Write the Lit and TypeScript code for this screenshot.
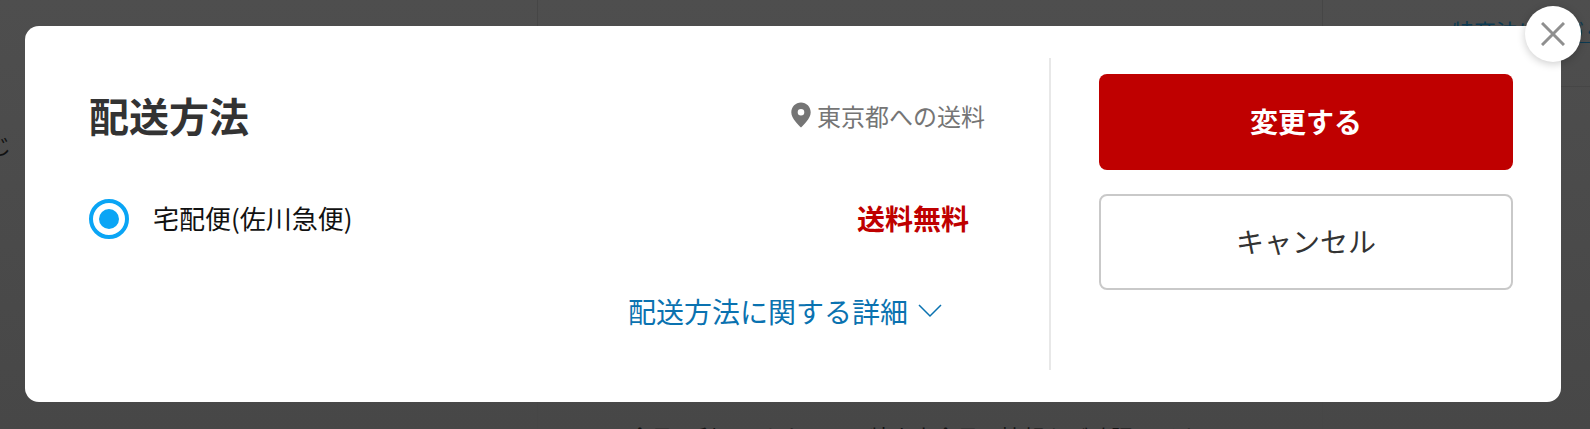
import { LitElement, html, css } from "lit";
import { customElement } from "lit/decorators.js";

@customElement("app-root")
export class AppRoot extends LitElement {
  static styles = css`
    :host { display: block; width: 1590px; height: 429px; position: relative; overflow: hidden; background: #4a4a4a; font-family: "Noto Sans CJK JP", "Liberation Sans", sans-serif; }
    .backdrop { position: absolute; inset: 0; background: linear-gradient(#4e4e4e, #474747); }
    .vline { position: absolute; top: 0; bottom: 0; width: 1px; background: #464646; }
    .v1 { left: 537px; }
    .v2 { left: 1322px; }
    .hline { position: absolute; left: 1561px; right: 0; top: 86px; height: 1px; background: #464646; }
    .bg-text { position: absolute; color: #111; white-space: nowrap; font-size: 22px; line-height: 24px; }
    .t1 { left: -33px; top: 132px; }
    .t2 { left: 629px; top: 424px; }
    .t3 { left: 1452px; top: 18px; color: #0b3a52; border-bottom: 1px solid #0b3a52; }
    .modal { position: absolute; left: 25px; top: 26px; width: 1536px; height: 376px; box-sizing: border-box; background: #fff; border-radius: 14px; display: flex; padding: 32px 0; }
    .main { width: 1026px; box-sizing: border-box; border-right: 2px solid #e8e8e8; padding: 0 64px 0 64px; display: flex; flex-direction: column; }
    .head { display: flex; align-items: center; justify-content: space-between; height: 52px; margin-top: 31px; }
    h2 { margin: 0; font-size: 40px; font-weight: 700; color: #333; line-height: 52px; }
    .area { display: flex; align-items: center; gap: 6px; color: #757575; font-size: 24px; }
    .row { display: flex; align-items: center; margin-top: 58px; height: 40px; padding-right: 16px; }
    .radio { width: 40px; height: 40px; box-sizing: border-box; border-radius: 50%; border: 4px solid #0aa5f5; display: flex; align-items: center; justify-content: center; }
    .radio i { width: 20px; height: 20px; border-radius: 50%; background: #0aa5f5; display: block; }
    .label { margin-left: 24px; font-size: 26px; color: #111; flex: 1; padding-bottom: 4px; }
    .free { font-size: 28px; font-weight: 700; color: #bf0000; padding-bottom: 2px; }
    .more { align-self: flex-end; margin-top: 52px; margin-right: 43px; display: flex; align-items: center; gap: 10px; color: #0a72b0; font-size: 28px; line-height: 40px; }
    .side { flex: 1; padding: 16px 48px 0 48px; display: flex; flex-direction: column; gap: 24px; }
    .btn { height: 96px; box-sizing: border-box; border-radius: 8px; display: flex; align-items: center; justify-content: center; font-size: 28px; padding-bottom: 3px; }
    .primary { background: #bf0000; color: #fff; font-weight: 700; }
    .secondary { border: 2px solid #c9c9c9; color: #333; background: #fff; }
    .close { position: absolute; left: 1525px; top: 6px; width: 56px; height: 56px; border-radius: 50%; background: #fff; box-shadow: 0 2px 8px rgba(0,0,0,.2); display: flex; align-items: center; justify-content: center; }
  `;
  render() {
    return html`
      <div class="backdrop">
        <div class="vline v1"></div><div class="vline v2"></div><div class="hline"></div>
        <div class="bg-text t1">同じ</div>
        <div class="bg-text t2">会員の利用にあたって、特定商会員の情報をご確認ください。</div>
        <div class="bg-text t3">特商法に基づく表記</div>
      </div>
      <div class="modal">
        <div class="main">
          <div class="head">
            <h2>配送方法</h2>
            <div class="area">
              <svg width="20" height="26" viewBox="0 0 20 26"><path fill="#757575" fill-rule="evenodd" d="M10 .5C4.600.5.300 4.800.300 10.200c0 6.600 7.300 12.600 9.700 15.300 2.400-2.700 9.700-8.700 9.700-15.300C19.700 4.800 15.400.500 10 .500zm0 13a3.300 3.300 0 1 1 0-6.600 3.300 3.300 0 0 1 0 6.600z"/></svg>
              <span>東京都への送料</span>
            </div>
          </div>
          <div class="row">
            <div class="radio"><i></i></div>
            <span class="label">宅配便(佐川急便)</span>
            <span class="free">送料無料</span>
          </div>
          <div class="more">
            <span>配送方法に関する詳細</span>
            <svg width="24" height="14" viewBox="0 0 24 14"><path d="M1 1l11 11L23 1" fill="none" stroke="#0a72b0" stroke-width="1.500"/></svg>
          </div>
        </div>
        <div class="side">
          <div class="btn primary">変更する</div>
          <div class="btn secondary">キャンセル</div>
        </div>
      </div>
      <div class="close">
        <svg width="24" height="24" viewBox="0 0 24 24"><path d="M1 1l22 22M23 1L1 23" stroke="#8f8f8f" stroke-width="3" fill="none"/></svg>
      </div>
    `;
  }
}
